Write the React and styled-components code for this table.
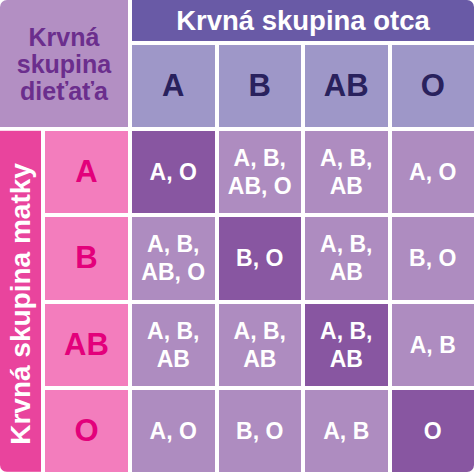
import React from 'react';
import styled, { createGlobalStyle } from 'styled-components';

const GlobalStyle = createGlobalStyle`
  html, body {
    margin: 0;
    padding: 0;
    background: #fff;
  }
  body {
    font-family: 'Liberation Sans', Arial, Helvetica, sans-serif;
  }
`;

const Table = styled.div`
  width: 474px;
  height: 472px;
  display: grid;
  grid-template-columns: 41px 83px repeat(4, 1fr);
  grid-template-rows: 41px repeat(5, 1fr);
  gap: 4px;
  background: #fff;
  border-radius: 7px;
  overflow: hidden;
  font-weight: 700;
`;

const Cell = styled.div`
  display: flex;
  align-items: center;
  justify-content: center;
  text-align: center;
`;

const ChildTitle = styled(Cell)`
  grid-column: 1 / 3;
  grid-row: 1 / 3;
  background: #b38fc3;
  color: #6b2e8d;
  font-size: 25px;
  line-height: 27px;
  padding-top: 2px;
`;

const FatherTitle = styled(Cell)`
  grid-column: 3 / 7;
  grid-row: 1 / 2;
  background: #695aa6;
  color: #fff;
  font-size: 27.5px;
  padding-top: 1px;
`;

const MotherTitle = styled(Cell)`
  grid-column: 1 / 2;
  grid-row: 3 / 7;
  background: #e9449d;
  color: #fff;
  font-size: 28px;
  writing-mode: vertical-rl;
  transform: rotate(180deg);
  white-space: nowrap;
  padding-bottom: 6px;
`;

const FatherType = styled(Cell)`
  background: #9e97c8;
  color: #29215d;
  font-size: 31px;
`;

const MotherType = styled(Cell)`
  background: #f37dbd;
  color: #e3007b;
  font-size: 31px;
`;

const Result = styled(Cell)`
  background: ${(p) => (p.$match ? '#8856a1' : '#ae8cc0')};
  color: #fff;
  font-size: 23px;
  line-height: 28px;
`;

const types = ['A', 'B', 'AB', 'O'];

const results = [
  [['A, O'], ['A, B,', 'AB, O'], ['A, B,', 'AB'], ['A, O']],
  [['A, B,', 'AB, O'], ['B, O'], ['A, B,', 'AB'], ['B, O']],
  [['A, B,', 'AB'], ['A, B,', 'AB'], ['A, B,', 'AB'], ['A, B']],
  [['A, O'], ['B, O'], ['A, B'], ['O']],
];

const App = () => (
  <>
    <GlobalStyle />
    <Table>
      <ChildTitle>
        Krvná<br />skupina<br />dieťaťa
      </ChildTitle>
      <FatherTitle>Krvná skupina otca</FatherTitle>
      {types.map((t) => (
        <FatherType key={'f' + t}>{t}</FatherType>
      ))}
      <MotherTitle>Krvná skupina matky</MotherTitle>
      {types.map((m, i) => (
        <React.Fragment key={'m' + m}>
          <MotherType style={{ gridColumn: 2 }}>{m}</MotherType>
          {results[i].map((lines, j) => (
            <Result key={j} $match={i === j}>
              <div>
                {lines.map((l, k) => (
                  <div key={k}>{l}</div>
                ))}
              </div>
            </Result>
          ))}
        </React.Fragment>
      ))}
    </Table>
  </>
);

export default App;
